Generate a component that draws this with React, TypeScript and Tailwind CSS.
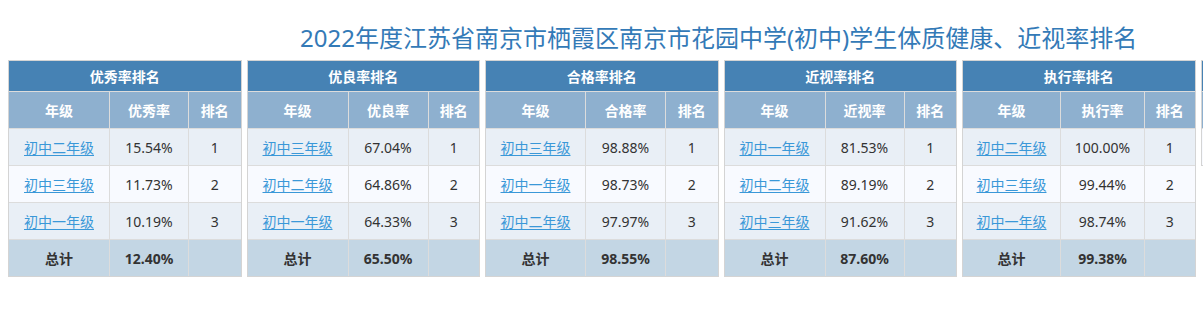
import React from "react";

type Row = [string, string, string];
type T = { title: string; col: string; rows: Row[]; total: string; w1: string; w2: string };

const tables: T[] = [
  { title: "优秀率排名", col: "优秀率", rows: [["初中二年级", "15.54%", "1"], ["初中三年级", "11.73%", "2"], ["初中一年级", "10.19%", "3"]], total: "12.40%", w1: "w-[101px]", w2: "w-[79px]" },
  { title: "优良率排名", col: "优良率", rows: [["初中三年级", "67.04%", "1"], ["初中二年级", "64.86%", "2"], ["初中一年级", "64.33%", "3"]], total: "65.50%", w1: "w-[101px]", w2: "w-[80px]" },
  { title: "合格率排名", col: "合格率", rows: [["初中三年级", "98.88%", "1"], ["初中一年级", "98.73%", "2"], ["初中二年级", "97.97%", "3"]], total: "98.55%", w1: "w-[100px]", w2: "w-[80px]" },
  { title: "近视率排名", col: "近视率", rows: [["初中一年级", "81.53%", "1"], ["初中二年级", "89.19%", "2"], ["初中三年级", "91.62%", "3"]], total: "87.60%", w1: "w-[101px]", w2: "w-[79px]" },
  { title: "执行率排名", col: "执行率", rows: [["初中二年级", "100.00%", "1"], ["初中三年级", "99.44%", "2"], ["初中一年级", "98.74%", "3"]], total: "99.38%", w1: "w-[98px]", w2: "w-[84px]" },
];

const font = { fontFamily: '"Noto Sans", "Noto Sans CJK SC", sans-serif' };

function Table({ t }: { t: T }) {
  return (
    <div className="w-[233.5px] shrink-0 border border-[#d4d4d4] text-[14px]">
      <div className="h-[31px] bg-[#4682b4] border-b border-[#dcdcdc] flex items-center justify-center text-white font-bold">
        {t.title}
      </div>
      <div className="flex h-[37px] bg-[#8eb0cf] border-b border-[#dcdcdc] text-white font-bold">
        <div className={`${t.w1} border-r border-[#dcdcdc] flex items-center justify-center`}>年级</div>
        <div className={`${t.w2} border-r border-[#dcdcdc] flex items-center justify-center`}>{t.col}</div>
        <div className="flex-1 flex items-center justify-center">排名</div>
      </div>
      {t.rows.map((r, i) => (
        <div key={i} className={`flex h-[37px] border-b border-[#dcdcdc] text-[#333] ${i % 2 === 0 ? "bg-[#e9eff6]" : "bg-[#f8faff]"}`}>
          <div className={`${t.w1} border-r border-[#dcdcdc] flex items-center justify-center`}>
            <a href="#" className="text-[#3a98d8] underline underline-offset-2">{r[0]}</a>
          </div>
          <div className={`${t.w2} border-r border-[#dcdcdc] flex items-center justify-center`}>{r[1]}</div>
          <div className="flex-1 flex items-center justify-center">{r[2]}</div>
        </div>
      ))}
      <div className="flex h-[36px] bg-[#c3d6e4] text-[#333] font-bold">
        <div className={`${t.w1} border-r border-[#dcdcdc] flex items-center justify-center`}>总计</div>
        <div className={`${t.w2} border-r border-[#dcdcdc] flex items-center justify-center`}>{t.total}</div>
        <div className="flex-1"></div>
      </div>
    </div>
  );
}

export default function App() {
  return (
    <div className="w-[1203px] h-[319px] bg-white overflow-hidden" style={font}>
      <div className="h-[60px] pt-[22px] pl-[300px] text-[24px] leading-[32px] text-[#337ab7] whitespace-nowrap">
        2022年度江苏省南京市栖霞区南京市花园中学(初中)学生体质健康、近视率排名
      </div>
      <div className="flex gap-[5px] pl-[8px] items-start">
        {tables.map((t, i) => (
          <Table key={i} t={t} />
        ))}
        <div className="w-[233.5px] shrink-0 border border-[#d4d4d4]">
          <div className="h-[31px] bg-[#4682b4] border-b border-[#dcdcdc]"></div>
          <div className="h-[37px] bg-[#8eb0cf] border-b border-[#dcdcdc]"></div>
          <div className="h-[36px] bg-[#f8faff]"></div>
        </div>
      </div>
    </div>
  );
}
